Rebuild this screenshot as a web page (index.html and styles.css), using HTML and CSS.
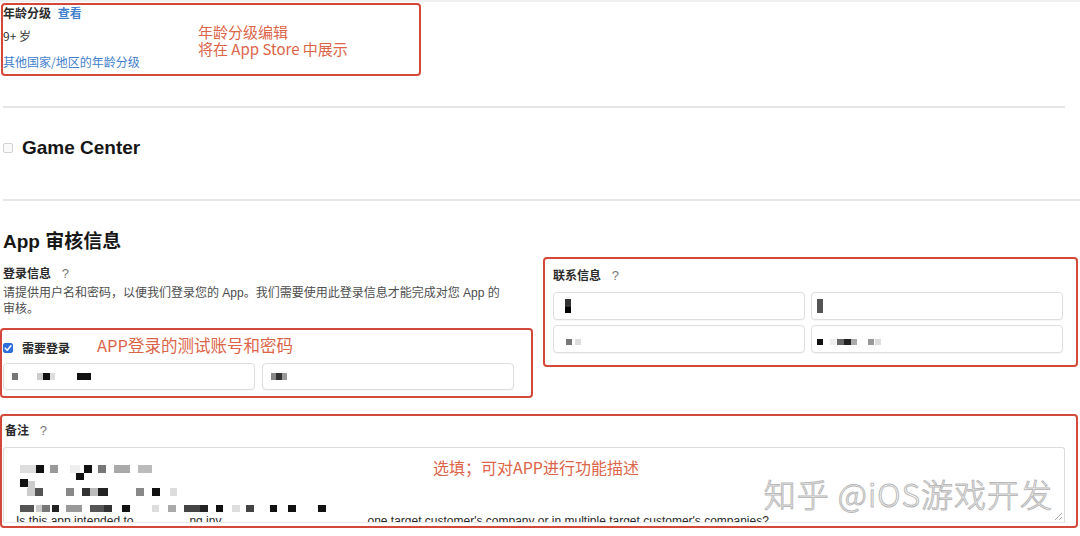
FILE: index.html
```html
<!DOCTYPE html>
<html lang="zh-CN">
<head>
    <meta charset="UTF-8" />
    <meta name="viewport" content="width=device-width, initial-scale=1" />
    <title>App 信息</title>
    <link rel="stylesheet" href="styles.css">
</head>
<body>
    <main class="page">
        <!-- 年龄分级 -->
        <section class="mark-box rating-box">
            <div class="rating-info">
                <div class="row-title">年龄分级 <a class="link" href="#">查看</a></div>
                <div class="rating-value">9+ 岁</div>
                <a class="link rating-other" href="#">其他国家/地区的年龄分级</a>
            </div>
            <div class="note rating-note">
                <div>年龄分级编辑</div>
                <div>将在 App Store 中展示</div>
            </div>
        </section>

        <hr class="divider short">

        <div class="game-center">
            <span class="box"></span>
            <h2>Game Center</h2>
        </div>

        <hr class="divider">

        <h2 class="section-title">App 审核信息</h2>

        <div class="review-grid">
            <div class="login-col">
                <div class="field-head">
                    <div class="row-title">登录信息 <span class="help">?</span></div>
                    <p class="hint">请提供用户名和密码，以便我们登录您的 App。我们需要使用此登录信息才能完成对您 App 的<br>审核。</p>
                </div>
                <div class="mark-box login-box">
                    <div class="check-row">
                        <span class="box checked">
                            <svg viewBox="0 0 10 10" width="10" height="10"><path d="M2.2 5.2 L4.2 7.2 L7.9 2.8" fill="none" stroke="#fff" stroke-width="1.6" stroke-linecap="round" stroke-linejoin="round"/></svg>
                        </span>
                        <span class="row-title">需要登录</span>
                        <span class="note login-note">APP登录的测试账号和密码</span>
                    </div>
                    <div class="inputs">
                        <div class="field">
                            <svg width="90" height="12" viewBox="0 0 90 12">
                                <rect x="8" y="2" width="6" height="7" fill="#777"/>
                                <rect x="33" y="2" width="6" height="7" fill="#ccc"/>
                                <rect x="39" y="2" width="7" height="7" fill="#111"/>
                                <rect x="46" y="2" width="5" height="7" fill="#ddd"/>
                                <rect x="73" y="2" width="14" height="7" fill="#111"/>
                            </svg>
                        </div>
                        <div class="field">
                            <svg width="30" height="12" viewBox="0 0 30 12">
                                <rect x="8" y="2" width="5" height="7" fill="#888"/>
                                <rect x="13" y="2" width="6" height="7" fill="#333"/>
                                <rect x="19" y="2" width="5" height="7" fill="#999"/>
                            </svg>
                        </div>
                    </div>
                </div>
            </div>

            <div class="mark-box contact-box">
                <div class="row-title">联系信息 <span class="help">?</span></div>
                <div class="contact-fields">
                    <div class="field tall">
                        <svg width="20" height="18" viewBox="0 0 20 18">
                            <rect x="11" y="2" width="6" height="8" fill="#333"/>
                            <rect x="11" y="10" width="6" height="6" fill="#000"/>
                        </svg>
                    </div>
                    <div class="field tall">
                        <svg width="20" height="18" viewBox="0 0 20 18">
                            <rect x="5" y="2" width="6" height="14" fill="#555"/>
                        </svg>
                    </div>
                    <div class="field tall">
                        <svg width="40" height="18" viewBox="0 0 40 18">
                            <rect x="12" y="9" width="6" height="6" fill="#777"/>
                            <rect x="21" y="9" width="6" height="6" fill="#ddd"/>
                        </svg>
                    </div>
                    <div class="field tall">
                        <svg width="110" height="18" viewBox="0 0 110 18">
                            <rect x="5" y="9" width="6" height="6" fill="#111"/>
                            <rect x="18" y="9" width="6" height="6" fill="#eee"/>
                            <rect x="25" y="9" width="7" height="6" fill="#666"/>
                            <rect x="32" y="9" width="7" height="6" fill="#222"/>
                            <rect x="39" y="9" width="6" height="6" fill="#aaa"/>
                            <rect x="56" y="9" width="6" height="6" fill="#999"/>
                            <rect x="63" y="9" width="6" height="6" fill="#ddd"/>
                        </svg>
                    </div>
                </div>
            </div>
        </div>

        <section class="mark-box notes-box">
            <div class="row-title">备注 <span class="help">?</span></div>
            <div class="textarea">
                <svg class="blur" width="340" height="66" viewBox="0 0 340 66">
                    <rect x="16" y="17" width="16" height="8" fill="#ddd"/>
                    <rect x="32" y="17" width="8" height="8" fill="#111"/>
                    <rect x="46" y="17" width="8" height="8" fill="#999"/>
                    <rect x="66" y="17" width="10" height="8" fill="#eee"/>
                    <rect x="80" y="17" width="8" height="8" fill="#111"/>
                    <rect x="72" y="25" width="8" height="7" fill="#111"/>
                    <rect x="94" y="17" width="8" height="8" fill="#777"/>
                    <rect x="110" y="17" width="16" height="8" fill="#aaa"/>
                    <rect x="134" y="17" width="14" height="8" fill="#bbb"/>
                    <rect x="16" y="31" width="8" height="8" fill="#111"/>
                    <rect x="24" y="33" width="7" height="7" fill="#ccc"/>
                    <rect x="23" y="40" width="8" height="8" fill="#ccc"/>
                    <rect x="31" y="40" width="8" height="8" fill="#555"/>
                    <rect x="62" y="40" width="8" height="8" fill="#888"/>
                    <rect x="78" y="40" width="8" height="8" fill="#333"/>
                    <rect x="86" y="40" width="8" height="8" fill="#bbb"/>
                    <rect x="94" y="40" width="10" height="8" fill="#222"/>
                    <rect x="132" y="40" width="8" height="8" fill="#888"/>
                    <rect x="148" y="40" width="8" height="8" fill="#111"/>
                    <rect x="166" y="40" width="7" height="8" fill="#ddd"/>
                    <rect x="16" y="57" width="14" height="7" fill="#555"/>
                    <rect x="32" y="57" width="6" height="7" fill="#ccc"/>
                    <rect x="38" y="57" width="8" height="7" fill="#777"/>
                    <rect x="48" y="57" width="7" height="7" fill="#222"/>
                    <rect x="62" y="57" width="16" height="7" fill="#999"/>
                    <rect x="86" y="57" width="14" height="7" fill="#555"/>
                    <rect x="100" y="57" width="8" height="7" fill="#333"/>
                    <rect x="118" y="57" width="8" height="7" fill="#111"/>
                    <rect x="148" y="57" width="7" height="7" fill="#ddd"/>
                    <rect x="164" y="57" width="8" height="7" fill="#aaa"/>
                    <rect x="180" y="57" width="16" height="7" fill="#444"/>
                    <rect x="196" y="57" width="8" height="7" fill="#222"/>
                    <rect x="212" y="57" width="7" height="7" fill="#111"/>
                    <rect x="228" y="57" width="8" height="7" fill="#ddd"/>
                    <rect x="242" y="57" width="8" height="7" fill="#444"/>
                    <rect x="266" y="57" width="7" height="7" fill="#111"/>
                    <rect x="284" y="57" width="8" height="7" fill="#111"/>
                    <rect x="314" y="57" width="8" height="7" fill="#111"/>
                </svg>
                <p class="question">Is this app intended to<span class="gap g1"></span>ng inv<span class="gap g2"></span>one target customer's company or in multiple target customer's companies?</p>
                <span class="grip"></span>
            </div>
            <span class="note notes-note">选填；可对APP进行功能描述</span>
            <span class="watermark">知乎 @iOS游戏开发</span>
        </section>
    </main>
</body>
</html>
```

FILE: styles.css
```css
/* Grundlayout */
* {
    box-sizing: border-box;
}
html, body {
    margin: 0;
    background: #fff;
    color: #1f1f1f;
    font-family: "Liberation Sans", "Noto Sans CJK SC", sans-serif;
}
body {
    border-top: 2px solid #f0f0f0;
    height: 536px;
    overflow: hidden;
}
.page {
    padding: 1px 0 0 3px;
}
a {
    text-decoration: none;
}
.link {
    color: #3f7fcb;
}
p {
    margin: 0;
}

/* Rote Markierungen */
.mark-box {
    border: 2px solid #d4483a;
    border-radius: 4px;
}
.note {
    color: #dc6448;
    font-family: "Noto Sans CJK SC", sans-serif;
}

/* Titel */
.row-title {
    font-size: 12px;
    line-height: 16px;
    font-weight: 700;
    color: #2a2a2a;
    font-family: "Noto Sans CJK SC", sans-serif;
}
.row-title .link {
    margin-left: 4px;
}
.help {
    font-family: "Liberation Sans", sans-serif;
    font-weight: 400;
    font-size: 13px;
    color: #777;
    margin-left: 8px;
}

/* Altersfreigabe */
.rating-box {
    width: 420px;
    height: 73px;
    margin-left: -2px;
    display: grid;
    grid-template-columns: 195px auto;
}
.rating-info {
    font-size: 12px;
    line-height: 16px;
    font-family: "Noto Sans CJK SC", sans-serif;
}
.rating-value {
    margin-top: 7px;
    color: #333;
}
.rating-other {
    display: block;
    margin-top: 10px;
}
.rating-note {
    padding-top: 18px;
    font-size: 15px;
}
.rating-note div {
    height: 17px;
    line-height: 17px;
    white-space: nowrap;
}

/* Trennlinien */
.divider {
    border: none;
    height: 2px;
    background: #e6e6e6;
    margin: 0;
}
.divider.short {
    width: 1062px;
    margin-top: 30px;
}

/* Game Center */
.game-center {
    display: flex;
    align-items: center;
    gap: 9px;
    margin: 29px 0 40px;
}
.game-center h2 {
    margin: 0;
    font-size: 19px;
    line-height: 22px;
    font-weight: 700;
    color: #161616;
}
.box {
    width: 10px;
    height: 10px;
    border: 1px solid #d2d2d2;
    border-radius: 2px;
    background: #fafafa;
    flex: none;
    display: flex;
}
.box.checked {
    background: #2f6fd8;
    border-color: #2f6fd8;
}
.box.checked svg {
    margin: -1px;
}

/* App Review */
.section-title {
    margin: 29px 0 3px;
    font-size: 19px;
    line-height: 24px;
    font-weight: 700;
    color: #161616;
    font-family: "Liberation Sans", "Noto Sans CJK SC", sans-serif;
}
.review-grid {
    display: grid;
    grid-template-columns: 533px 535px;
    column-gap: 10px;
    align-items: start;
    margin-left: -3px;
}
.field-head {
    padding: 8px 0 0 3px;
}
.hint {
    margin-top: 3px;
    font-size: 12px;
    line-height: 16px;
    color: #4d4d4d;
    font-family: "Liberation Sans", "Noto Sans CJK SC", sans-serif;
}

/* Eingabefelder */
.field {
    height: 27px;
    border: 1px solid #dedede;
    border-radius: 4px;
    background: #fff;
    box-shadow: 0 1px 1px rgba(0,0,0,0.04);
    display: flex;
    align-items: center;
}
.field.tall {
    height: 28px;
}

/* Login */
.login-box {
    margin-top: 11px;
    height: 70px;
    padding: 6px 0 6px 1px;
}
.check-row {
    height: 24px;
    display: flex;
    align-items: center;
}
.check-row .row-title {
    margin-left: 9px;
}
.login-note {
    margin: 0 0 6px 27px;
    font-size: 16.5px;
    line-height: 20px;
}
.inputs {
    margin-top: 3px;
    display: grid;
    grid-template-columns: 252px 252px;
    column-gap: 7px;
}

/* Kontakt */
.contact-box {
    height: 110px;
    padding: 8px 0 0 8px;
}
.contact-fields {
    margin-top: 8px;
    display: grid;
    grid-template-columns: 252px 252px;
    gap: 5px 6px;
}

/* Notizen */
.notes-box {
    position: relative;
    margin: 16px 0 0 -3px;
    width: 1078px;
    height: 114px;
    padding: 6px 0 0 1px;
}
.notes-box > .row-title {
    padding-left: 2px;
}
.textarea {
    position: relative;
    margin-top: 8px;
    width: 1062px;
    height: 76px;
    border: 1px solid #dcdcdc;
    border-bottom-color: #e8e8e8;
    border-radius: 3px 3px 0 0;
    overflow: hidden;
}
.blur {
    display: block;
}
.question {
    margin: 0 0 0 12px;
    font-size: 12px;
    line-height: 14px;
    color: #2a2a2a;
    white-space: nowrap;
}
.gap {
    display: inline-block;
    width: 56px;
}
.gap.g2 {
    width: 146px;
}
.grip {
    position: absolute;
    right: 2px;
    bottom: 2px;
    width: 7px;
    height: 7px;
    background: linear-gradient(135deg, transparent 45%, #aaa 45%, #aaa 55%, transparent 55%, transparent 72%, #aaa 72%, #aaa 82%, transparent 82%);
}
.notes-note {
    position: absolute;
    left: 431px;
    top: 41px;
    font-size: 16px;
    line-height: 20px;
}
.watermark {
    position: absolute;
    right: 23px;
    top: 59px;
    font-family: "Noto Sans CJK SC", sans-serif;
    font-size: 32px;
    line-height: 36px;
    font-weight: 300;
    color: #fff;
    -webkit-text-stroke: 1px #b8b8b8;
    letter-spacing: 1px;
    white-space: nowrap;
}
```
